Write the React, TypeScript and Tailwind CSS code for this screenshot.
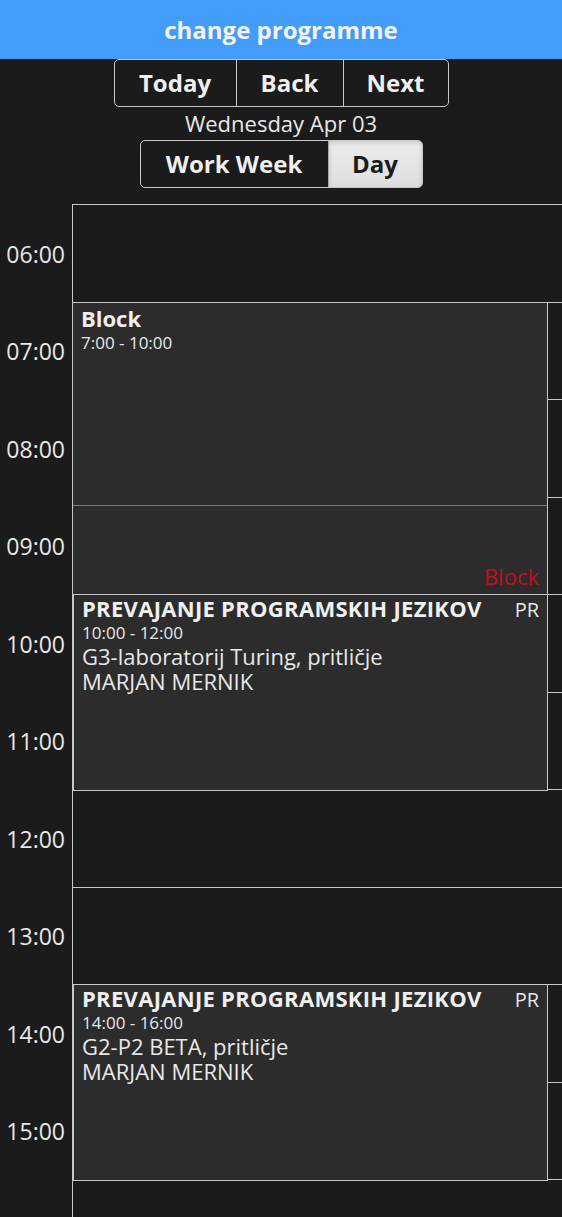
import React from "react";

const hours = ["06:00","07:00","08:00","09:00","10:00","11:00","12:00","13:00","14:00","15:00","",""];

function EventBox({ top, height, title, time, room, teacher }: { top: number; height: number; title: string; time: string; room: string; teacher: string }) {
  return (
    <div className="absolute left-0 right-[14px] bg-[#2c2c2c] border border-[#c8c8c8] px-[8px] pt-[1px]" style={{ top, height }}>
      <div className="flex justify-between items-baseline">
        <span className="font-bold text-[22px] leading-[25px] tracking-[0.3px] text-[#f0f0f0]">{title}</span>
        <span className="text-[20px] leading-[25px] text-[#e8e8e8]">PR</span>
      </div>
      <div className="text-[17px] leading-[22px] text-[#e8e8e8]">{time}</div>
      <div className="text-[22px] leading-[25px] text-[#e8e8e8]">{room}</div>
      <div className="text-[22px] leading-[25px] text-[#e8e8e8]">{teacher}</div>
    </div>
  );
}

export default function App() {
  return (
    <div className="bg-[#1b1b1b] font-['Open_Sans',sans-serif] text-[#eeeeee] overflow-hidden h-[1217px]">
      <div className="h-[59px] bg-[#429cf9] flex items-center justify-center text-[24px] font-bold text-[#f4f4f4]">
        change programme
      </div>
      <div className="flex flex-col items-center">
        <div className="flex h-[48px] border border-[#c8c8c8] rounded-[5px] text-[24px] font-bold text-[#f0f0f0]">
          <div className="w-[121px] flex items-center justify-center">Today</div>
          <div className="w-[107px] flex items-center justify-center border-l border-[#c8c8c8]">Back</div>
          <div className="w-[105px] flex items-center justify-center border-l border-[#c8c8c8]">Next</div>
        </div>
        <div className="h-[33px] flex items-center text-[22px] text-[#e8e8e8]">Wednesday Apr 03</div>
        <div className="flex h-[48px] border border-[#c8c8c8] rounded-[5px] text-[24px] font-bold overflow-hidden">
          <div className="w-[187px] flex items-center justify-center text-[#f0f0f0]">Work Week</div>
          <div className="w-[94px] flex items-center justify-center border-l border-[#aaaaaa] bg-gradient-to-b from-[#ececec] to-[#dedede] text-[#1b1b1b] shadow-[inset_0_2px_4px_rgba(0,0,0,0.15)]">Day</div>
        </div>
      </div>
      <div className="mt-[16px] flex">
        <div className="w-[72px] flex flex-col pt-[1px]">
          {hours.map((h, i) => (
            <div key={i} className={`${i % 2 === 0 ? "h-[98px]" : "h-[97px]"} flex items-center justify-end pr-[7px] text-[23px] text-[#e8e8e8]`}>
              {h}
            </div>
          ))}
        </div>
        <div className="flex-1 relative border-l border-t border-[#c8c8c8]">
          {hours.map((h, i) => (
            <div key={i} className={`${i % 2 === 0 ? "h-[98px]" : "h-[97px]"} border-b border-[#c8c8c8]`} />
          ))}
          <div className="absolute left-0 right-[14px] top-[97px] h-[293px] bg-[#2c2c2c] border border-l-0 border-[#c8c8c8] flex flex-col">
            <div className="h-[203px] border-b border-[#7a7a7a] px-[8px] pt-[1px]">
              <div className="font-bold text-[22px] leading-[29px] text-[#f0f0f0]">Block</div>
              <div className="text-[17px] leading-[19px] text-[#e8e8e8]">7:00 - 10:00</div>
            </div>
            <div className="flex-1 flex items-end justify-end pr-[8px] pb-[1px] text-[22px] text-[#c50f1f]">Block</div>
          </div>
          <EventBox top={389} height={197} title="PREVAJANJE PROGRAMSKIH JEZIKOV" time="10:00 - 12:00" room="G3-laboratorij Turing, pritličje" teacher="MARJAN MERNIK" />
          <EventBox top={779} height={197} title="PREVAJANJE PROGRAMSKIH JEZIKOV" time="14:00 - 16:00" room="G2-P2 BETA, pritličje" teacher="MARJAN MERNIK" />
        </div>
      </div>
    </div>
  );
}
